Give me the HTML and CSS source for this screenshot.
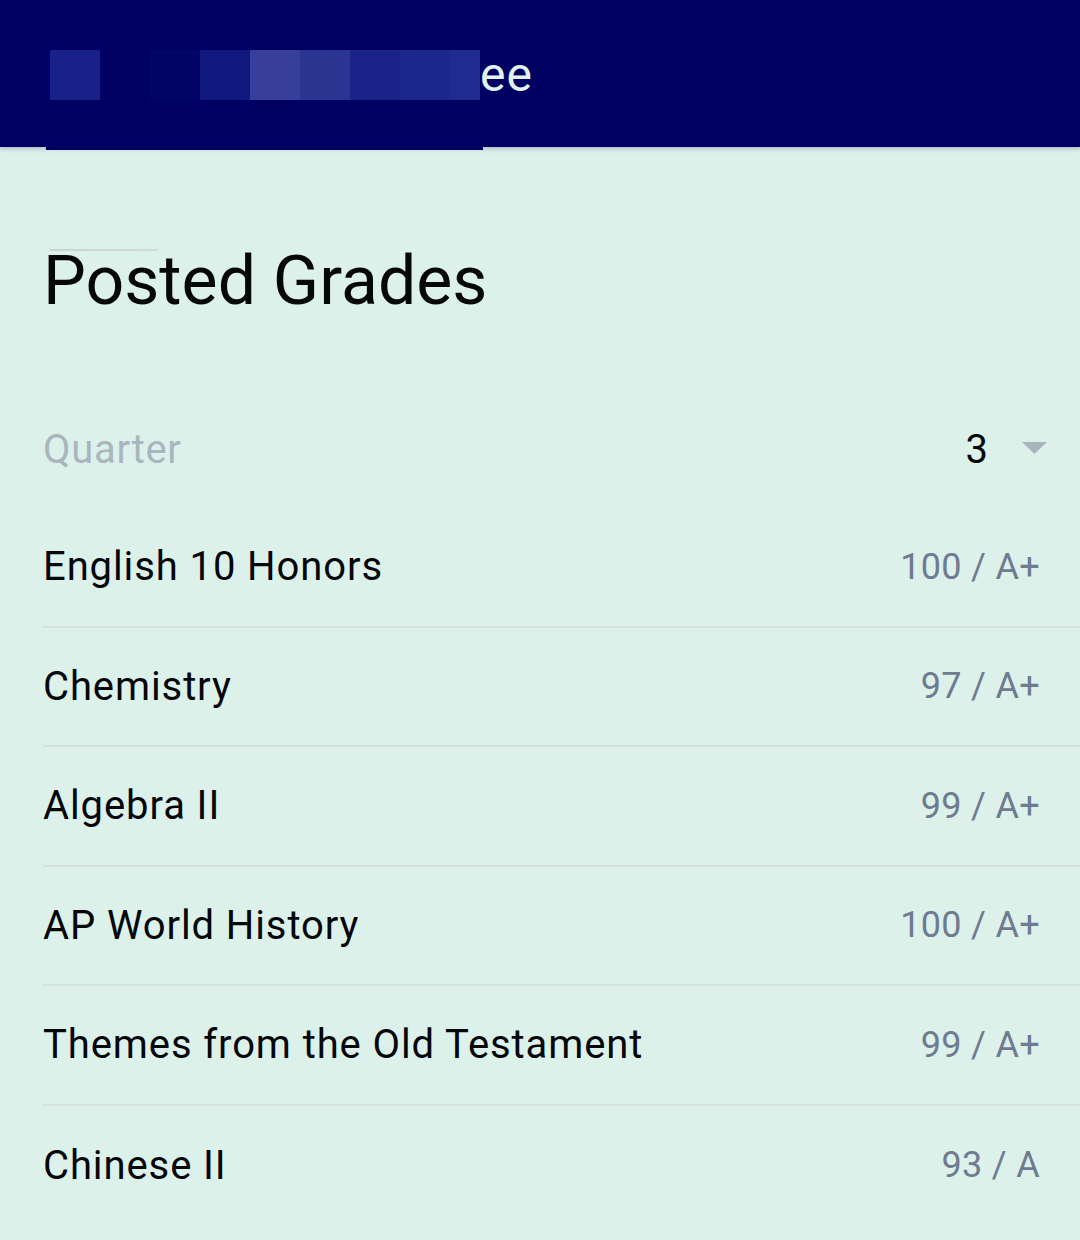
FILE: index.html
```html
<!DOCTYPE html>
<html lang="en">
<head>
<meta charset="utf-8">
<title>Posted Grades</title>
<link rel="stylesheet" href="styles.css">
</head>
<body>
<header class="appbar">
  <div class="pixels">
    <span class="px p1"></span><span class="px p2"></span><span class="px p3"></span><span class="px p4"></span><span class="px p5"></span><span class="px p6"></span><span class="px p7"></span><span class="px p8"></span><span class="px p9"></span>
  </div>
  <span class="appbar-title">ee</span>
</header>
<div class="tab-indicator"></div>
<main class="content">
  <h1 class="page-title">Posted Grades</h1>
  <div class="quarter-row">
    <span class="quarter-label">Quarter</span>
    <span class="quarter-select">
      <span class="quarter-value">3</span>
      <svg class="caret" width="25" height="12" viewBox="0 0 25 12"><path d="M0 0 L25 0 L12.5 12 Z" fill="#a9b5bd"/></svg>
    </span>
  </div>
  <ul class="grade-list">
    <li class="grade-row"><span class="course">English 10 Honors</span><span class="grade">100 / A+</span></li>
    <li class="grade-row"><span class="course">Chemistry</span><span class="grade">97 / A+</span></li>
    <li class="grade-row"><span class="course">Algebra II</span><span class="grade">99 / A+</span></li>
    <li class="grade-row"><span class="course">AP World History</span><span class="grade">100 / A+</span></li>
    <li class="grade-row"><span class="course">Themes from the Old Testament</span><span class="grade">99 / A+</span></li>
    <li class="grade-row last"><span class="course">Chinese II</span><span class="grade">93 / A</span></li>
  </ul>
</main>
</body>
</html>
```

FILE: styles.css
```css
* { box-sizing: border-box; }

html, body {
  margin: 0;
  padding: 0;
  background: #ddf1eb;
  font-family: Roboto, "Noto Sans", "Liberation Sans", sans-serif;
  height: 100%;
  overflow: hidden;
}

.appbar {
  height: 147px;
  background: #000062;
  display: flex;
  align-items: center;
  padding-left: 50px;
  box-shadow: 0 2px 4px rgba(80, 90, 130, 0.35);
}

.pixels {
  display: flex;
  height: 50px;
  margin-top: 3px;
}

.px {
  display: block;
  width: 50px;
  height: 50px;
}
.p1 { background: #18208a; }
.p2 { background: #000062; }
.p3 { background: #020466; }
.p4 { background: #10177e; }
.p5 { background: #373f9a; }
.p6 { background: #2a3592; }
.p7 { background: #1a2388; }
.p8 { background: #1c278c; }
.p9 { background: #1f2b8f; width: 30px; }

.appbar-title {
  color: #e2f2ef;
  font-size: 48px;
  letter-spacing: 1px;
  line-height: 1;
  margin-top: 2px;
}

.tab-indicator {
  width: 437px;
  height: 3px;
  margin-left: 46px;
  background: #000062;
}

.content {
  padding-left: 43px;
}

.page-title {
  position: relative;
  margin: 89px 0 0 0;
  font-size: 68px;
  font-weight: 400;
  line-height: 84px;
  color: #050708;
}
.page-title::before {
  content: "";
  position: absolute;
  left: 7px;
  top: 10px;
  width: 108px;
  height: 2px;
  background: linear-gradient(to right, #c9d3d1, #d3dcda);
}

.quarter-row {
  margin-top: 67px;
  height: 118px;
  display: flex;
  align-items: center;
  justify-content: space-between;
  padding-right: 33px;
}

.quarter-label {
  font-size: 40px;
  letter-spacing: 0.7px;
  color: #a9b6bd;
}

.quarter-select {
  display: flex;
  align-items: center;
  gap: 34px;
}

.quarter-value {
  font-size: 40px;
  color: #050708;
}

.caret {
  display: block;
  margin-top: -2px;
}

.grade-list {
  list-style: none;
  margin: 0;
  padding: 0;
}

.grade-row {
  height: 119.5px;
  display: flex;
  align-items: center;
  justify-content: space-between;
  padding-right: 40px;
  border-bottom: 2px solid #d2e2de;
}
.grade-row.last { border-bottom: none; }

.course {
  font-size: 40px;
  letter-spacing: 0.9px;
  color: #05070a;
}

.grade {
  font-size: 36px;
  letter-spacing: 0.3px;
  color: #6e7b90;
}
```
